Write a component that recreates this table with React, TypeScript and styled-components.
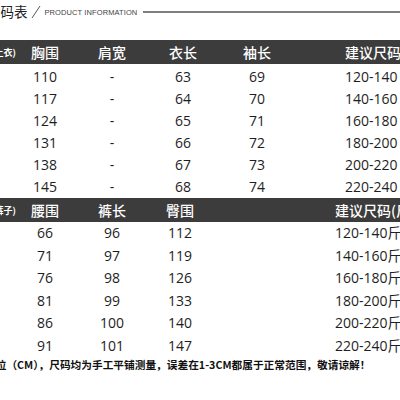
import React from "react";
import styled, { createGlobalStyle } from "styled-components";

const Global = createGlobalStyle`
  html, body { margin: 0; padding: 0; background: #fff; }
  body { font-family: "Open Sans", "Noto Sans CJK SC", sans-serif; }
`;

const Page = styled.div`
  width: 400px;
  height: 400px;
  overflow: hidden;
  background: #fff;
`;

const Sheet = styled.div`
  margin-left: -44px;
  width: 520px;
  display: flex;
  flex-direction: column;
`;

const TitleRow = styled.div`
  display: flex;
  align-items: center;
  height: 24px;
  margin-bottom: 16px;
  padding-left: 31px;
`;

const Title = styled.span`
  font-family: "Noto Sans CJK SC", sans-serif;
  font-size: 13.5px;
  color: #222;
  line-height: 1;
  white-space: nowrap;
`;

const Slash = styled.svg`
  margin-left: 3px;
  flex: none;
`;

const Subtitle = styled.span`
  margin-left: 4px;
  font-family: "Liberation Sans", sans-serif;
  font-size: 7.5px;
  color: #444;
  white-space: nowrap;
  letter-spacing: 0.1px;
`;

const Rule = styled.div`
  flex: 1;
  height: 2px;
  margin-left: 6px;
  background: #7e7e7e;
`;

const Bar = styled.div<{ $cols: string }>`
  display: grid;
  grid-template-columns: ${(p) => p.$cols};
  height: 24px;
  align-items: center;
  background: #3c3c3c;
  color: #fff;
`;

const Body = styled.div<{ $pad: number }>`
  padding-top: ${(p) => p.$pad}px;
`;

const Row = styled.div<{ $cols: string; $h: number }>`
  display: grid;
  grid-template-columns: ${(p) => p.$cols};
  height: ${(p) => p.$h}px;
  align-items: center;
  color: #1e1e1e;
  font-size: 14px;
`;

const Cell = styled.div<{ $lead?: number }>`
  text-align: ${(p) => (p.$lead != null ? "left" : "center")};
  padding-left: ${(p) => p.$lead ?? 0}px;
  white-space: nowrap;
  line-height: 1;
`;

const HeadCell = styled(Cell)`
  font-family: "Noto Sans CJK SC", sans-serif;
  font-size: 14px;
  font-weight: 500;
`;

const Tag = styled.div`
  text-align: right;
  font-family: "Noto Sans CJK SC", sans-serif;
  font-size: 9px;
  font-weight: 700;
  white-space: nowrap;
`;

const Note = styled.div`
  padding-left: 29px;
  font-family: "Noto Sans CJK SC", sans-serif;
  font-size: 10.7px;
  font-weight: 700;
  line-height: 16px;
  color: #111;
  white-space: nowrap;
`;

const topCols = "60px 58px 76px 66px 82px 1fr";
const bottomCols = "60px 58px 76px 60px 1fr";

const tops = [
  ["110", "-", "63", "69", "120-140"],
  ["117", "-", "64", "70", "140-160"],
  ["124", "-", "65", "71", "160-180"],
  ["131", "-", "66", "72", "180-200"],
  ["138", "-", "67", "73", "200-220"],
  ["145", "-", "68", "74", "220-240"],
];

const bottoms = [
  ["66", "96", "112", "120-140斤"],
  ["71", "97", "119", "140-160斤"],
  ["76", "98", "126", "160-180斤"],
  ["81", "99", "133", "180-200斤"],
  ["86", "100", "140", "200-220斤"],
  ["91", "101", "147", "220-240斤"],
];

export default function App() {
  return (
    <Page>
      <Global />
      <Sheet>
        <TitleRow>
          <Title>尺码表</Title>
          <Slash width="10" height="14" viewBox="0 0 10 14">
            <line x1="1" y1="13" x2="9" y2="1" stroke="#555" strokeWidth="1" />
          </Slash>
          <Subtitle>PRODUCT INFORMATION</Subtitle>
          <Rule />
        </TitleRow>

        <Bar $cols={topCols}>
          <Tag>尺码(上衣)</Tag>
          <HeadCell>胸围</HeadCell>
          <HeadCell>肩宽</HeadCell>
          <HeadCell>衣长</HeadCell>
          <HeadCell>袖长</HeadCell>
          <HeadCell $lead={47}>建议尺码(斤)</HeadCell>
        </Bar>
        <Body $pad={2}>
          {tops.map((r, i) => (
            <Row key={i} $cols={topCols} $h={22}>
              <Cell />
              <Cell>{r[0]}</Cell>
              <Cell>{r[1]}</Cell>
              <Cell>{r[2]}</Cell>
              <Cell>{r[3]}</Cell>
              <Cell $lead={47}>{r[4]}</Cell>
            </Row>
          ))}
        </Body>

        <Bar $cols={bottomCols}>
          <Tag>尺码(裤子)</Tag>
          <HeadCell>腰围</HeadCell>
          <HeadCell>裤长</HeadCell>
          <HeadCell>臀围</HeadCell>
          <HeadCell $lead={125}>建议尺码(斤)</HeadCell>
        </Bar>
        <Body $pad={0}>
          {bottoms.map((r, i) => (
            <Row key={i} $cols={bottomCols} $h={22.5}>
              <Cell />
              <Cell>{r[0]}</Cell>
              <Cell>{r[1]}</Cell>
              <Cell>{r[2]}</Cell>
              <Cell $lead={125}>{r[3]}</Cell>
            </Row>
          ))}
        </Body>

        <Note>单位（CM），尺码均为手工平铺测量，误差在1-3CM都属于正常范围，敬请谅解！</Note>
      </Sheet>
    </Page>
  );
}
